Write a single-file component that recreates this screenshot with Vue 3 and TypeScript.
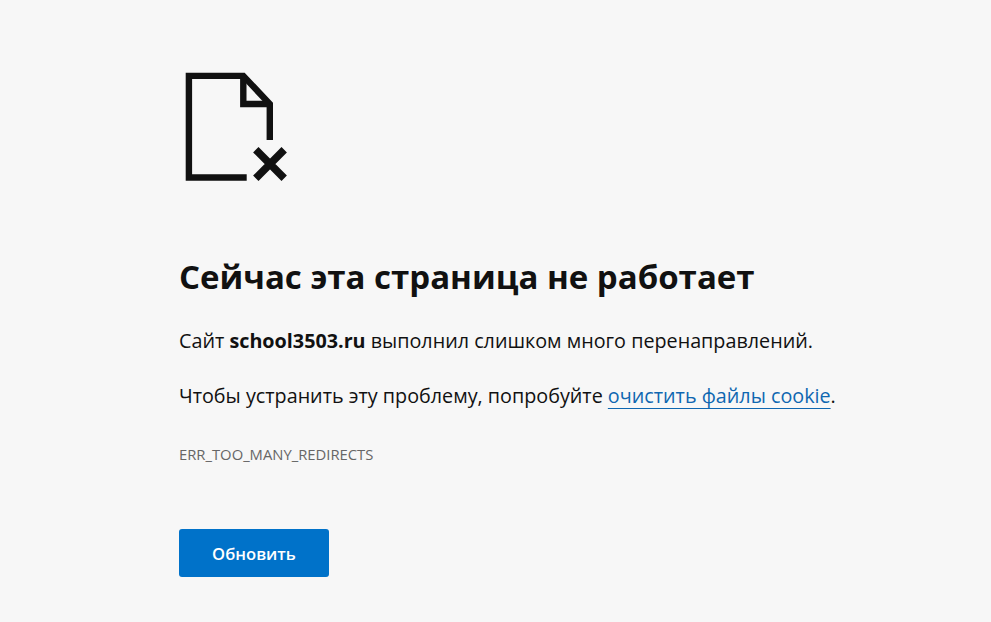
<script setup lang="ts">
const host = 'school3503.ru'
const errorCode = 'ERR_TOO_MANY_REDIRECTS'
</script>

<template>
  <main class="page">
    <svg class="icon" width="110" height="112" viewBox="0 0 110 112" fill="none" stroke="#111" stroke-width="6.4">
      <path d="M61.700 105.500H3.900V3.900H58.300L84.800 32V68" />
      <path d="M58.300 3.900V32H84.800" />
      <path d="M70.800 77.800L99.200 106.200M99.200 77.800L70.800 106.200" stroke-width="7.600" />
    </svg>
    <h1>Сейчас эта страница не работает</h1>
    <p class="line">Сайт <strong>{{ host }}</strong> выполнил слишком много перенаправлений.</p>
    <p class="line second">Чтобы устранить эту проблему, попробуйте <a href="#">очистить файлы cookie</a>.</p>
    <p class="code">{{ errorCode }}</p>
    <button type="button">Обновить</button>
  </main>
</template>

<style>
html, body {
  margin: 0;
  background: #f7f7f7;
}
</style>

<style scoped>
.page {
  box-sizing: border-box;
  width: 991px;
  height: 622px;
  overflow: hidden;
  padding: 72px 0 0 179px;
  background: #f7f7f7;
  color: #111;
  font-family: "Open Sans", "Noto Sans", sans-serif;
}
.icon {
  display: block;
  margin-left: 6px;
}
h1 {
  margin: 67px 0 0;
  font-size: 33px;
  line-height: 52px;
  font-weight: 700;
}
.line {
  margin: 23px 0 0;
  font-size: 19.75px;
  line-height: 30px;
}
.second {
  margin-top: 25px;
}
a {
  color: #0f67b1;
  text-decoration: underline 1px;
  text-decoration-skip-ink: none;
  text-underline-offset: 5px;
}
.code {
  margin: 33px 0 0;
  font-size: 14.8px;
  font-weight: 500;
  line-height: 20px;
  color: #666;
}
button {
  display: block;
  margin-top: 65px;
  width: 150px;
  height: 48px;
  border: 0;
  border-radius: 3px;
  background: #0072c9;
  color: #fff;
  font-family: inherit;
  font-size: 16.6px;
  font-weight: 600;
}
</style>
